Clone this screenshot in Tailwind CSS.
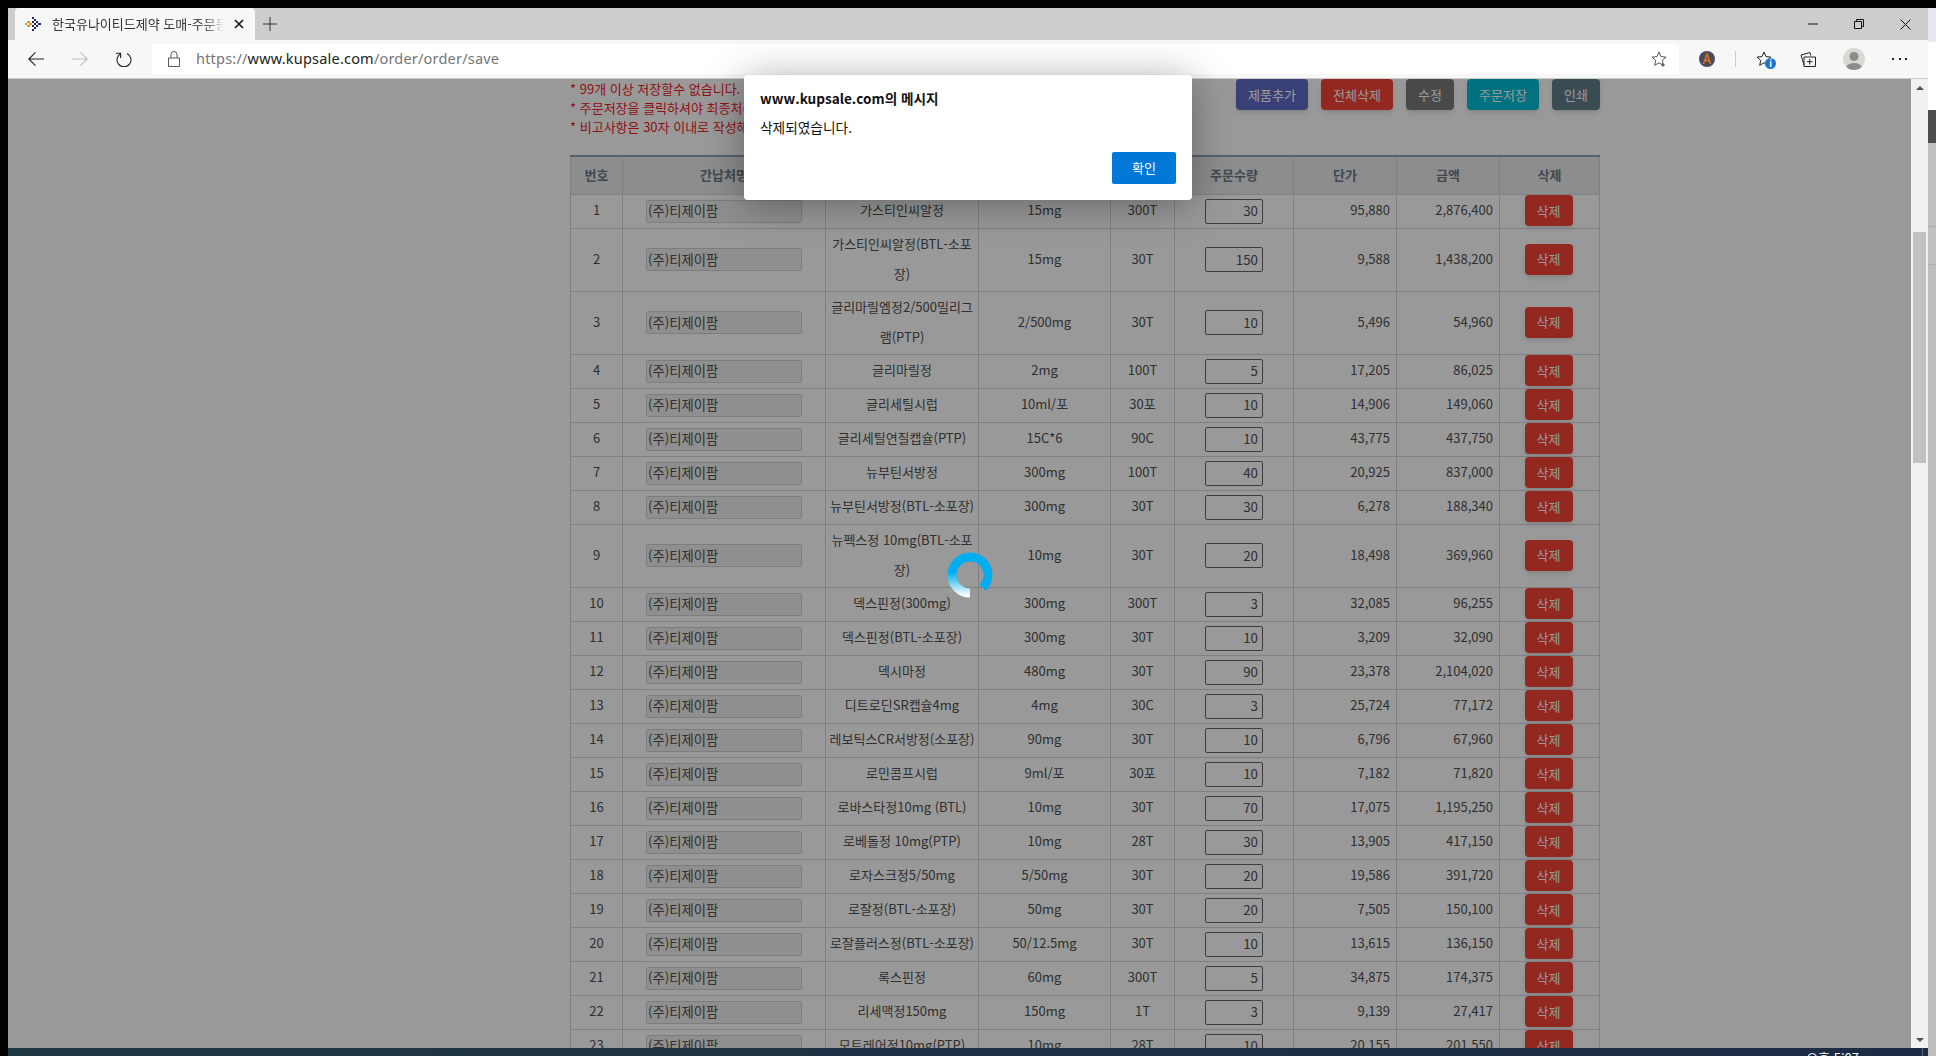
<!DOCTYPE html>
<html lang="ko">
<head>
    <meta charset="UTF-8">
    <title>한국유나이티드제약 도매-주문등록</title>
    <script src="https://cdn.jsdelivr.net/npm/@tailwindcss/browser@4"></script>
</head>
<body class="relative flex h-screen w-full overflow-hidden bg-black font-['Noto_Sans_CJK_KR','Noto_Sans',sans-serif]">
    <div class="w-2 shrink-0 bg-black"></div>

    <div class="flex min-w-0 flex-1 flex-col pt-2">
        <!-- Tab strip -->
        <div class="flex h-8 shrink-0 items-stretch bg-[#cdcdcd] pl-[7px]">
            <div class="flex w-60 items-center rounded-t bg-[#f7f7f7] pl-[10px] pr-[11px]">
                <svg class="h-4 w-4 shrink-0" viewBox="0 0 16 16">
                    <path fill="#f28c28" d="M0 7h2v2H0zM2 5h3v2H2zM2 9h3v2H2zM4 7h3v2H4z"/>
                    <path fill="#1d2a78" d="M7 1h2v2H7zM9 3h2v2H9zM11 5h2v2h-2zM13 7h3v2h-3zM11 9h2v2h-2zM9 11h2v2H9zM7 13h2v2H7zM7 5h2v2H7zM9 7h2v2H9zM7 9h2v2H7z"/>
                </svg>
                <span class="ml-[11px] -mt-px w-[173px] overflow-hidden whitespace-nowrap text-[13px] text-[#333] [mask-image:linear-gradient(to_right,black_88%,transparent)]">한국유나이티드제약 도매-주문등록</span>
                <svg class="ml-[10px] h-[10px] w-[10px] shrink-0" viewBox="0 0 10 10" stroke="#111" stroke-width="1.6" fill="none"><path d="M1 1l8 8M9 1l-8 8"/></svg>
            </div>
            <div class="flex w-[30px] items-center justify-center">
                <svg class="h-[14px] w-[14px]" viewBox="0 0 14 14" stroke="#333" fill="none"><path d="M7 0v14M0 7h14"/></svg>
            </div>
            <div class="ml-auto flex items-center">
                <div class="flex w-[46px] justify-center"><svg class="h-[10px] w-[10px]" viewBox="0 0 10 10" stroke="#111" fill="none"><path d="M0 5h10"/></svg></div>
                <div class="flex w-[46px] justify-center"><svg class="h-[10px] w-[10px]" viewBox="0 0 10 10" stroke="#111" fill="none"><path d="M.5 2.5h7v7h-7zM2.5 2.5v-2h7v7h-2"/></svg></div>
                <div class="flex w-[46px] justify-center"><svg class="h-[11px] w-[11px]" viewBox="0 0 11 11" stroke="#111" fill="none"><path d="M.5.5l10 10M10.500.5l-10 10"/></svg></div>
            </div>
        </div>

        <!-- Toolbar -->
        <div class="flex h-[39px] shrink-0 items-center border-b border-[#ccc] bg-[#f7f7f7]">
            <div class="flex w-[144px] shrink-0 items-center pl-[20px]">
                <svg class="h-4 w-4" viewBox="0 0 16 16" stroke="#222" stroke-width="1.1" fill="none"><path d="M16 8H.8M7.500 1.300L.8 8l6.700 6.700"/></svg>
                <svg class="ml-[28px] h-4 w-4" viewBox="0 0 16 16" stroke="#bdbdbd" stroke-width="1.1" fill="none"><path d="M0 8h15.200M8.500 1.300L15.200 8l-6.700 6.700"/></svg>
                <svg class="ml-[28px] h-4 w-4" viewBox="0 0 16 16" stroke="#222" stroke-width="1.1" fill="none"><path d="M5 2.400A7 7 0 1 0 11 2.400M4.600 7V2.200H0"/></svg>
            </div>
            <div class="flex h-[30px] w-[1527px] shrink-0 items-center rounded bg-white pl-[16px] pr-[12px]">
                <svg class="h-4 w-3 shrink-0" viewBox="0 0 12 16" stroke="#555" fill="none"><path d="M.5 7h11v8.500H.5zM3 7V3.500a3 3 0 0 1 6 0V7"/></svg>
                <span class="ml-[16px] text-[14.5px] tracking-[0.2px] text-[#767676] font-['Noto_Sans',sans-serif]">https://<span class="text-[#222]">www.kupsale.com</span>/order/order/save</span>
                <svg class="ml-auto h-4 w-4" viewBox="0 0 16 16" stroke="#555" fill="none"><path d="M8 1l2 4.600 5 .5-3.700 3.300 1 4.900L8 11.800 3.700 14.300l1-4.900L1 6.100l5-.5zM12 12v4M10 14h4"/></svg>
            </div>
            <div class="flex flex-1 items-center">
                <svg class="ml-[20px] h-4 w-4" viewBox="0 0 16 16"><circle cx="8" cy="8" r="8" fill="#4a4a5c"/><path d="M4.500 13L8 3l3.500 10M6 9.500h4" stroke="#e0761f" stroke-width="1.400" fill="none"/></svg>
                <div class="ml-[20px] h-4 w-px bg-[#ccc]"></div>
                <div class="relative ml-5 h-4 w-4">
                    <svg class="h-4 w-4" viewBox="0 0 16 16" stroke="#222" fill="none"><path d="M8 1l2 4.600 5 .5-3.700 3.300 1 4.900L8 11.800 3.700 14.300l1-4.900L1 6.100l5-.5z"/></svg>
                    <span class="absolute left-[9px] top-[7px] flex h-[11px] w-[11px] items-center justify-center rounded-full bg-[#1a73d9] text-[9px] font-bold leading-none text-white">i</span>
                </div>
                <svg class="ml-7 h-4 w-4" viewBox="0 0 16 16" stroke="#222" fill="none"><path d="M4 15.500h11.500V6H4zM1 4l9-2.500.7 3M4 14L1 4M9.700 8v5.500M7 10.700h5.500"/></svg>
                <div class="ml-[27px] h-[22px] w-[22px] overflow-hidden rounded-full bg-[#d9d8d4]">
                    <svg class="h-[22px] w-[22px]" viewBox="0 0 22 22" fill="#8e8c88"><circle cx="11" cy="8.500" r="4.500"/><ellipse cx="11" cy="20" rx="8" ry="5"/></svg>
                </div>
                <div class="ml-[27px] flex gap-[4.500px]">
                    <span class="h-[2px] w-[2px] bg-[#222]"></span><span class="h-[2px] w-[2px] bg-[#222]"></span><span class="h-[2px] w-[2px] bg-[#222]"></span>
                </div>
            </div>
        </div>

        <!-- Page + scrollbar -->
        <div class="flex min-h-0 flex-1">
            <div class="relative min-w-0 flex-1 overflow-hidden bg-white">
                <div class="ml-[562px] w-[1030px]">
                    <div class="mb-[19px] flex justify-between">
                        <div class="text-[13px] leading-[19px] text-[#ee1c1c]">
                            <p>* 99개 이상 저장할수 없습니다.</p>
                            <p>* 주문저장을 클릭하셔야 최종처리됩니다.</p>
                            <p>* 비고사항은 30자 이내로 작성해주세요.</p>
                        </div>
                        <div class="flex h-[31px] gap-[13px] text-[13px] text-white [&_button]:h-[31px] [&_button]:rounded [&_button]:shadow-md">
                            <button class="w-[72px] bg-[#5f6cc8]">제품추가</button>
                            <button class="w-[72px] bg-[#f44336]">전체삭제</button>
                            <button class="w-12 bg-[#7a7a7a]">수정</button>
                            <button class="w-[72px] bg-[#00bcd4]">주문저장</button>
                            <button class="w-12 bg-[#607d8b]">인쇄</button>
                        </div>
                    </div>

                    <table class="w-[1029px] table-fixed border-collapse border-t-2 border-t-[#8aa5c2] text-center text-[13px] text-[#505050] [&_td]:h-[34px] [&_td]:border [&_td]:border-[#d5d5d5] [&_td]:px-[6px] [&_td]:pt-0 [&_td]:pb-[2px] [&_td]:leading-[30px] [&_td:nth-child(3)]:px-[3px] [&_td:has(input)]:pb-0 [&_td:has(button)]:pb-px [&_td:has(button)]:pr-2 [&_.co]:mx-auto [&_.co]:block [&_.co]:h-[23px] [&_.co]:w-[156px] [&_.co]:rounded-[2px] [&_.co]:border [&_.co]:border-[#d0d0d0] [&_.co]:bg-[#eee] [&_.co]:px-[1px] [&_.co]:text-[13.33px] [&_.qty]:mx-auto [&_.qty]:block [&_.qty]:h-[25px] [&_.qty]:w-[58px] [&_.qty]:rounded-[2px] [&_.qty]:border [&_.qty]:border-[#666] [&_.qty]:pr-1 [&_.qty]:text-right [&_.qty]:text-[13.33px] [&_.del]:mx-auto [&_.del]:block [&_.del]:h-[31px] [&_.del]:w-12 [&_.del]:rounded [&_.del]:bg-[#f44336] [&_.del]:text-white [&_.del]:shadow-md">
                        <colgroup>
                            <col class="w-[52px]"><col class="w-[203px]"><col class="w-[153px]"><col class="w-[132px]"><col class="w-[64px]"><col class="w-[119px]"><col class="w-[103px]"><col class="w-[103px]"><col class="w-[100px]">
                        </colgroup>
                        <thead>
                            <tr class="bg-[#ececec] text-[#6b7987] [&_th]:h-[38px] [&_th]:border [&_th]:border-[#d5d5d5] [&_th]:border-t-[#8aa5c2] [&_th]:pb-px [&_th]:font-bold">
                                <th>번호</th><th>간납처명</th><th>제품명</th><th>규격</th><th>포장</th><th>주문수량</th><th>단가</th><th>금액</th><th>삭제</th>
                            </tr>
                        </thead>
                        <tbody>
                            <tr><td>1</td><td><input class="co" readonly value="(주)티제이팜"></td><td>가스티인씨알정</td><td>15mg</td><td>300T</td><td><input class="qty" readonly value="30"></td><td class="text-right">95,880</td><td class="text-right">2,876,400</td><td><button class="del">삭제</button></td></tr>
                            <tr><td>2</td><td><input class="co" readonly value="(주)티제이팜"></td><td>가스티인씨알정(BTL-소포장)</td><td>15mg</td><td>30T</td><td><input class="qty" readonly value="150"></td><td class="text-right">9,588</td><td class="text-right">1,438,200</td><td><button class="del">삭제</button></td></tr>
                            <tr><td>3</td><td><input class="co" readonly value="(주)티제이팜"></td><td>글리마릴엠정2/500밀리그램(PTP)</td><td>2/500mg</td><td>30T</td><td><input class="qty" readonly value="10"></td><td class="text-right">5,496</td><td class="text-right">54,960</td><td><button class="del">삭제</button></td></tr>
                            <tr><td>4</td><td><input class="co" readonly value="(주)티제이팜"></td><td>글리마릴정</td><td>2mg</td><td>100T</td><td><input class="qty" readonly value="5"></td><td class="text-right">17,205</td><td class="text-right">86,025</td><td><button class="del">삭제</button></td></tr>
                            <tr><td>5</td><td><input class="co" readonly value="(주)티제이팜"></td><td>글리세틸시럽</td><td>10ml/포</td><td>30포</td><td><input class="qty" readonly value="10"></td><td class="text-right">14,906</td><td class="text-right">149,060</td><td><button class="del">삭제</button></td></tr>
                            <tr><td>6</td><td><input class="co" readonly value="(주)티제이팜"></td><td>글리세틸연질캡슐(PTP)</td><td>15C*6</td><td>90C</td><td><input class="qty" readonly value="10"></td><td class="text-right">43,775</td><td class="text-right">437,750</td><td><button class="del">삭제</button></td></tr>
                            <tr><td>7</td><td><input class="co" readonly value="(주)티제이팜"></td><td>뉴부틴서방정</td><td>300mg</td><td>100T</td><td><input class="qty" readonly value="40"></td><td class="text-right">20,925</td><td class="text-right">837,000</td><td><button class="del">삭제</button></td></tr>
                            <tr><td>8</td><td><input class="co" readonly value="(주)티제이팜"></td><td>뉴부틴서방정(BTL-소포장)</td><td>300mg</td><td>30T</td><td><input class="qty" readonly value="30"></td><td class="text-right">6,278</td><td class="text-right">188,340</td><td><button class="del">삭제</button></td></tr>
                            <tr><td>9</td><td><input class="co" readonly value="(주)티제이팜"></td><td>뉴펙스정 10mg(BTL-소포장)</td><td>10mg</td><td>30T</td><td><input class="qty" readonly value="20"></td><td class="text-right">18,498</td><td class="text-right">369,960</td><td><button class="del">삭제</button></td></tr>
                            <tr><td>10</td><td><input class="co" readonly value="(주)티제이팜"></td><td>덱스핀정(300mg)</td><td>300mg</td><td>300T</td><td><input class="qty" readonly value="3"></td><td class="text-right">32,085</td><td class="text-right">96,255</td><td><button class="del">삭제</button></td></tr>
                            <tr><td>11</td><td><input class="co" readonly value="(주)티제이팜"></td><td>덱스핀정(BTL-소포장)</td><td>300mg</td><td>30T</td><td><input class="qty" readonly value="10"></td><td class="text-right">3,209</td><td class="text-right">32,090</td><td><button class="del">삭제</button></td></tr>
                            <tr><td>12</td><td><input class="co" readonly value="(주)티제이팜"></td><td>덱시마정</td><td>480mg</td><td>30T</td><td><input class="qty" readonly value="90"></td><td class="text-right">23,378</td><td class="text-right">2,104,020</td><td><button class="del">삭제</button></td></tr>
                            <tr><td>13</td><td><input class="co" readonly value="(주)티제이팜"></td><td>디트로딘SR캡슐4mg</td><td>4mg</td><td>30C</td><td><input class="qty" readonly value="3"></td><td class="text-right">25,724</td><td class="text-right">77,172</td><td><button class="del">삭제</button></td></tr>
                            <tr><td>14</td><td><input class="co" readonly value="(주)티제이팜"></td><td>레보틱스CR서방정(소포장)</td><td>90mg</td><td>30T</td><td><input class="qty" readonly value="10"></td><td class="text-right">6,796</td><td class="text-right">67,960</td><td><button class="del">삭제</button></td></tr>
                            <tr><td>15</td><td><input class="co" readonly value="(주)티제이팜"></td><td>로민콤프시럽</td><td>9ml/포</td><td>30포</td><td><input class="qty" readonly value="10"></td><td class="text-right">7,182</td><td class="text-right">71,820</td><td><button class="del">삭제</button></td></tr>
                            <tr><td>16</td><td><input class="co" readonly value="(주)티제이팜"></td><td>로바스타정10mg (BTL)</td><td>10mg</td><td>30T</td><td><input class="qty" readonly value="70"></td><td class="text-right">17,075</td><td class="text-right">1,195,250</td><td><button class="del">삭제</button></td></tr>
                            <tr><td>17</td><td><input class="co" readonly value="(주)티제이팜"></td><td>로베돌정 10mg(PTP)</td><td>10mg</td><td>28T</td><td><input class="qty" readonly value="30"></td><td class="text-right">13,905</td><td class="text-right">417,150</td><td><button class="del">삭제</button></td></tr>
                            <tr><td>18</td><td><input class="co" readonly value="(주)티제이팜"></td><td>로자스크정5/50mg</td><td>5/50mg</td><td>30T</td><td><input class="qty" readonly value="20"></td><td class="text-right">19,586</td><td class="text-right">391,720</td><td><button class="del">삭제</button></td></tr>
                            <tr><td>19</td><td><input class="co" readonly value="(주)티제이팜"></td><td>로잘정(BTL-소포장)</td><td>50mg</td><td>30T</td><td><input class="qty" readonly value="20"></td><td class="text-right">7,505</td><td class="text-right">150,100</td><td><button class="del">삭제</button></td></tr>
                            <tr><td>20</td><td><input class="co" readonly value="(주)티제이팜"></td><td>로잘플러스정(BTL-소포장)</td><td>50/12.5mg</td><td>30T</td><td><input class="qty" readonly value="10"></td><td class="text-right">13,615</td><td class="text-right">136,150</td><td><button class="del">삭제</button></td></tr>
                            <tr><td>21</td><td><input class="co" readonly value="(주)티제이팜"></td><td>록스핀정</td><td>60mg</td><td>300T</td><td><input class="qty" readonly value="5"></td><td class="text-right">34,875</td><td class="text-right">174,375</td><td><button class="del">삭제</button></td></tr>
                            <tr><td>22</td><td><input class="co" readonly value="(주)티제이팜"></td><td>리세맥정150mg</td><td>150mg</td><td>1T</td><td><input class="qty" readonly value="3"></td><td class="text-right">9,139</td><td class="text-right">27,417</td><td><button class="del">삭제</button></td></tr>
                            <tr><td>23</td><td><input class="co" readonly value="(주)티제이팜"></td><td>모트레어정10mg(PTP)</td><td>10mg</td><td>28T</td><td><input class="qty" readonly value="10"></td><td class="text-right">20,155</td><td class="text-right">201,550</td><td><button class="del">삭제</button></td></tr>
                        </tbody>
                    </table>
                </div>

                <!-- Dim layer and loading spinner -->
                <div class="absolute inset-0 bg-black/40"></div>
                <svg class="absolute left-[939px] top-[473px] h-[46px] w-[46px]" viewBox="-23 -23 46 46" fill="none" stroke-width="9">
                    <defs>
                        <linearGradient id="fade" gradientUnits="userSpaceOnUse" x1="0" y1="-23" x2="0" y2="23">
                            <stop offset="0.45" stop-color="#00aeef"/>
                            <stop offset="0.95" stop-color="#ffffff"/>
                        </linearGradient>
                    </defs>
                    <path d="M0 18A18 18 0 0 1 0 -18" stroke="url(#fade)"/>
                    <path d="M0 -18A18 18 0 0 1 12.700 12.700" stroke="#00aeef"/>
                </svg>
            </div>

            <!-- Scrollbar -->
            <div class="flex w-[17px] shrink-0 flex-col items-center bg-[#f1f1f1]">
                <div class="flex h-[17px] items-center justify-center">
                    <div class="h-0 w-0 border-x-[4px] border-b-[4px] border-x-transparent border-b-[#505050]"></div>
                </div>
                <div class="mt-[136px] h-[231px] w-[13px] bg-[#c1c1c1]"></div>
                <div class="mt-auto flex h-[17px] items-center justify-center">
                    <div class="h-0 w-0 border-x-[4px] border-t-[4px] border-x-transparent border-t-[#505050]"></div>
                </div>
            </div>
        </div>

        <!-- Taskbar sliver -->
        <div class="flex h-2 shrink-0 justify-end overflow-hidden bg-gradient-to-r from-[#203844] to-[#1b2b44] text-[13px] leading-[16px] text-white">
            <span class="mr-[63px] mt-[2px]">오후 5:07</span>
            <span class="mr-[5px] h-2 w-px bg-[#5a6a7a]"></span>
        </div>
    </div>

    <!-- Window behind, right edge -->
    <div class="flex w-2 shrink-0 flex-col pt-2">
        <div class="h-[34px] bg-[#e6eaee]"></div>
        <div class="h-[68px] bg-white"></div>
        <div class="h-[33px] bg-[#4d4d4d]"></div>
        <div class="h-[84px] border-b border-[#adadad] bg-[#bfbfbf]"></div>
        <div class="h-[38px] border-b border-[#adadad] bg-[#c0c0c0]"></div>
        <div class="flex-1 bg-[#bdbdbd]"></div>
    </div>

    <!-- Alert dialog -->
    <div class="absolute left-[744px] top-[75px] h-[125px] w-[448px] rounded bg-white px-4 pt-[12px] shadow-[0_4px_40px_rgba(0,0,0,0.35)]">
        <p class="text-[13.6px] font-semibold leading-[22px] text-[#111]">www.kupsale.com의 메시지</p>
        <p class="mt-2 text-[13.7px] leading-[20px] text-[#111]">삭제되였습니다.</p>
        <div class="mt-[15px] flex justify-end">
            <button class="h-8 w-16 rounded-[2px] bg-[#0078d7] text-[13px] text-white">확인</button>
        </div>
    </div>
</body>
</html>
